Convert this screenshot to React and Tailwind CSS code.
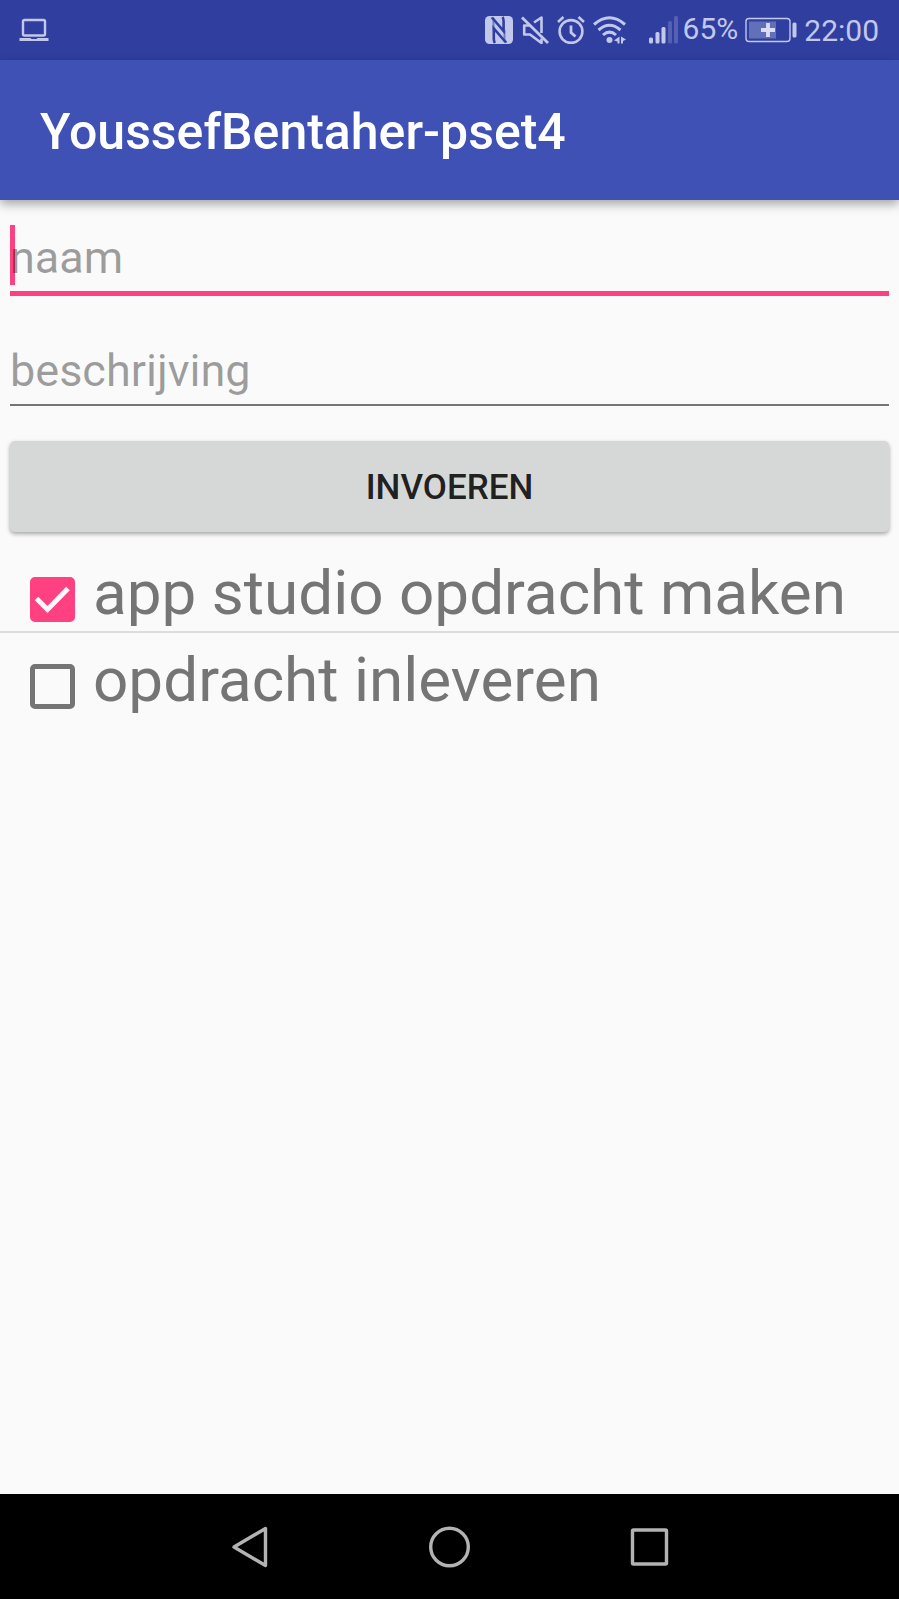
import { useState } from "react";

function LaptopIcon() {
  return (
    <svg width="30" height="24" viewBox="0 0 30 24" fill="none" aria-hidden="true">
      <rect x="4" y="2" width="22" height="15.5" rx="1.5" stroke="currentColor" strokeWidth="2.4" />
      <path d="M0.5 20h11l1 1h5l1-1h11v3h-29z" fill="currentColor" />
    </svg>
  );
}

function NfcIcon() {
  return (
    <svg width="28" height="28" viewBox="0 0 28 28" aria-hidden="true">
      <rect width="28" height="28" rx="4.5" fill="currentColor" />
      <path
        d="M7 1.5L18.6 15V5Q18.6 2.5 17.5 1M21 26.5L8.8 12.5V23Q8.8 25.5 10 27"
        fill="none"
        stroke="#303f9f"
        strokeWidth="2.6"
      />
      <path d="M5.5 1L9.5 2.5L9.5 14H7.5V5Q7 3 5.5 1Z" fill="#303f9f" opacity="0.55" />
      <path d="M22.5 27L18.5 25.5L18.5 14H20.5V23Q21 25 22.5 27Z" fill="#303f9f" opacity="0.55" />
    </svg>
  );
}

function MuteIcon() {
  return (
    <svg width="28" height="28" viewBox="0 0 28 28" fill="none" stroke="currentColor" strokeWidth="2.6" aria-hidden="true">
      <path d="M1 1.5L27 27" strokeWidth="2.8" />
      <path d="M8.5 9.5H3.2V18.5H9L20.5 27V22.5" strokeLinejoin="round" />
      <path d="M13 6.5L20.5 1.5V17" strokeLinejoin="round" />
    </svg>
  );
}

function AlarmIcon() {
  return (
    <svg width="28" height="28" viewBox="0 0 28 28" fill="none" stroke="currentColor" aria-hidden="true">
      <circle cx="14" cy="15.5" r="11.4" strokeWidth="2.6" />
      <path d="M14 9.5V16.5L18.5 20.5" strokeWidth="2.8" />
      <path d="M1 6L6.5 1M21.5 1L27 6" strokeWidth="2.6" />
    </svg>
  );
}

function WifiIcon() {
  return (
    <svg width="34" height="28" viewBox="0 0 34 28" fill="none" stroke="currentColor" aria-hidden="true">
      <path d="M1 8.5Q16.5 -5 32 8.5M5.5 14Q16.5 4.5 27.5 14M10 19Q16.5 13.2 23 19" strokeWidth="3" />
      <circle cx="16.5" cy="24" r="3" fill="currentColor" stroke="none" />
      <path d="M26.5 20.5V27.5H24.5V25.5L21 24.5Z M28 20.5L33 23.5L30 25V27.5H28Z" fill="currentColor" stroke="none" />
    </svg>
  );
}

function SignalIcon() {
  return (
    <svg width="30" height="28" viewBox="0 0 30 28" fill="currentColor" aria-hidden="true">
      <rect x="0" y="21.5" width="4" height="6" rx="1.5" />
      <rect x="6.5" y="16" width="4" height="11.5" rx="1.5" />
      <rect x="12.5" y="11" width="4" height="16.5" rx="1.5" />
      <rect x="19" y="5" width="4" height="22.5" rx="1.5" opacity="0.25" />
      <rect x="25" y="0" width="4" height="27.5" rx="1.5" opacity="0.25" />
    </svg>
  );
}

function BatteryIcon() {
  return (
    <svg width="52" height="26" viewBox="0 0 52 26" aria-hidden="true">
      <rect x="1" y="1.5" width="44" height="23" rx="3" fill="none" stroke="currentColor" strokeWidth="1.4" />
      <rect x="4" y="4.5" width="27" height="17" fill="currentColor" opacity="0.35" />
      <path d="M16 13H30M23 6V20" stroke="#d9def5" strokeWidth="3.8" />
      <rect x="47.5" y="5.5" width="4" height="15" rx="1.5" fill="currentColor" />
    </svg>
  );
}

function StatusBar() {
  return (
    <div className="flex h-[60px] items-center justify-between bg-[#303f9f] pr-5 pl-[19px] text-[30px] leading-9 text-[#c1c8ec]">
      <LaptopIcon />
      <div className="flex items-center">
        <div className="flex items-center gap-2">
          <NfcIcon />
          <MuteIcon />
          <AlarmIcon />
          <WifiIcon />
        </div>
        <div className="ml-[22px] flex items-center gap-1">
          <SignalIcon />
          <span className="pb-0.5">65%</span>
        </div>
        <div className="ml-[7px] flex items-center gap-[7px]">
          <BatteryIcon />
          <span className="pt-0.5">22:00</span>
        </div>
      </div>
    </div>
  );
}

function TaskRow({ task, onToggle }) {
  return (
    <li>
      <label className="flex items-end gap-[18px] pt-2.5 pr-5 pb-px pl-[30px]">
        <span className="mb-2 grid size-[45px] shrink-0">
          <input
            type="checkbox"
            checked={task.done}
            onChange={onToggle}
            className="col-start-1 row-start-1 size-[45px] appearance-none rounded-[5px] border-5 border-[#757575] checked:border-[#ff4081] checked:bg-[#ff4081]"
          />
          {task.done && (
            <svg className="pointer-events-none col-start-1 row-start-1" width="45" height="45" viewBox="0 0 45 45" aria-hidden="true">
              <path d="M6.5 21.5L17.5 32.5L38 11.5" fill="none" stroke="#fafafa" strokeWidth="5" />
            </svg>
          )}
        </span>
        <span className="text-[62px] leading-[74px] text-[#757575]">{task.title}</span>
      </label>
    </li>
  );
}

function NavBar() {
  const button = "flex w-2/9 items-center justify-center";
  return (
    <nav className="flex h-[105px] justify-center bg-black text-[#b3b3b3]">
      <button type="button" aria-label="Terug" className={button}>
        <svg width="44" height="44" viewBox="0 0 44 44" fill="none" stroke="currentColor" strokeWidth="3.4" strokeLinejoin="round">
          <path d="M6 22L37.5 3.5V40.5Z" />
        </svg>
      </button>
      <button type="button" aria-label="Start" className={button}>
        <svg width="44" height="44" viewBox="0 0 44 44" fill="none" stroke="currentColor" strokeWidth="3.4">
          <circle cx="22.5" cy="22" r="18.8" />
        </svg>
      </button>
      <button type="button" aria-label="Recent" className={button}>
        <svg width="44" height="44" viewBox="0 0 44 44" fill="none" stroke="currentColor" strokeWidth="3.4" strokeLinejoin="round">
          <rect x="5.5" y="5" width="34" height="34" rx="1" />
        </svg>
      </button>
    </nav>
  );
}

export default function App() {
  const [tasks, setTasks] = useState([
    { title: "app studio opdracht maken", done: true },
    { title: "opdracht inleveren", done: false },
  ]);
  const toggle = (index) =>
    setTasks(tasks.map((task, i) => (i === index ? { ...task, done: !task.done } : task)));

  const field =
    "relative block h-[66px] w-full bg-transparent text-[45px] text-black/87 outline-none placeholder:text-black/38";

  return (
    <div className="flex min-h-screen flex-col bg-[#fafafa] font-[Roboto,sans-serif]">
      <StatusBar />
      <header className="flex h-[140px] items-center bg-[#3f51b5] px-10 pt-1 shadow-[0_4px_10px_rgba(0,0,0,0.35)]">
        <h1 className="text-[50px] leading-[60px] font-medium text-white">YoussefBentaher-pset4</h1>
      </header>

      <main className="flex-1">
        <form className="flex flex-col px-2.5 pt-[25px]" onSubmit={(event) => event.preventDefault()}>
          <div className="relative border-b-5 border-[#ff4081]">
            <span className="absolute top-0 left-0 h-[60px] w-[5px] bg-[#ff4081]" />
            <input type="text" aria-label="naam" placeholder="naam" className={field} />
          </div>
          <div className="mt-[42px] border-b-2 border-[#757575]">
            <input type="text" aria-label="beschrijving" placeholder="beschrijving" className={field} />
          </div>
          <button
            type="submit"
            className="mt-[35px] h-[91px] rounded-[5px] bg-[#d6d7d7] pt-1 text-[35px] font-medium text-black/87 shadow-[0_2px_4px_rgba(0,0,0,0.35)]"
          >
            INVOEREN
          </button>
        </form>
        <ul className="mt-3.5 divide-y-2 divide-[#dcdcdc]">
          {tasks.map((task, index) => (
            <TaskRow key={task.title} task={task} onToggle={() => toggle(index)} />
          ))}
        </ul>
      </main>

      <NavBar />
    </div>
  );
}
